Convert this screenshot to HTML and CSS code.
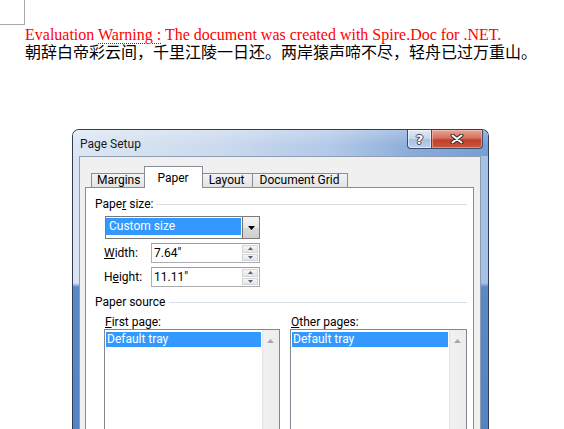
FILE: index.html
```html
<!DOCTYPE html>
<html>
<head>
<meta charset="utf-8">
<title>Page Setup</title>
<link rel="stylesheet" href="styles.css">
</head>
<body>
<div class="page">
  <div class="corner"></div>
  <p class="warn">Evaluation <span class="squiggle">Warning :</span> The document was created with Spire.Doc for .NET.</p>
  <p class="poem">朝辞白帝彩云间，千里江陵一日还。两岸猿声啼不尽，轻舟已过万重山。</p>

  <div class="dialog">
    <div class="titlebar">
      <span class="title">Page Setup</span>
      <div class="caption-btns">
        <div class="cbtn help">?</div>
        <div class="cbtn close">
          <svg width="14" height="10" viewBox="0 0 14 10">
            <path d="M2.5 1.5L11.5 8.5M11.5 1.5L2.5 8.5" stroke="#3a2a2a" stroke-width="4" stroke-linecap="round" fill="none"/>
            <path d="M2.5 1.5L11.5 8.5M11.5 1.5L2.5 8.5" stroke="#ffffff" stroke-width="2" stroke-linecap="round" fill="none"/>
          </svg>
        </div>
      </div>
    </div>
    <div class="frame">
      <div class="client">
        <div class="tabs">
          <div class="tab tab-first">Margins</div>
          <div class="tab active">Paper</div>
          <div class="tab">Layout</div>
          <div class="tab">Document Grid</div>
        </div>
        <div class="panel">
          <div class="group-head"><span>Pape<u>r</u> size:</span><i class="rule"></i></div>
          <div class="group-body">
            <div class="combo">
              <div class="combo-val">Custom size</div>
              <div class="combo-btn">
                <svg width="7" height="4" viewBox="0 0 7 4"><path d="M0 0h7L3.5 4z" fill="#000"/></svg>
              </div>
            </div>
            <div class="field">
              <span class="field-label"><u>W</u>idth:</span>
              <div class="spin">
                <span class="spin-val">7.64"</span>
                <div class="spin-btns">
                  <div class="spin-btn"><svg width="7" height="4" viewBox="0 0 7 4"><path d="M0 4h7L3.5 0z" fill="#4d6185"/></svg></div>
                  <div class="spin-btn"><svg width="7" height="4" viewBox="0 0 7 4"><path d="M0 0h7L3.5 4z" fill="#4d6185"/></svg></div>
                </div>
              </div>
            </div>
            <div class="field">
              <span class="field-label">H<u>e</u>ight:</span>
              <div class="spin">
                <span class="spin-val">11.11"</span>
                <div class="spin-btns">
                  <div class="spin-btn"><svg width="7" height="4" viewBox="0 0 7 4"><path d="M0 4h7L3.5 0z" fill="#4d6185"/></svg></div>
                  <div class="spin-btn"><svg width="7" height="4" viewBox="0 0 7 4"><path d="M0 0h7L3.5 4z" fill="#4d6185"/></svg></div>
                </div>
              </div>
            </div>
          </div>

          <div class="group-head source"><span>Paper source</span><i class="rule"></i></div>
          <div class="group-body lists">
            <div class="listcol first">
              <div class="list-label"><u>F</u>irst page:</div>
              <div class="listbox">
                <div class="list-items"><div class="item sel">Default tray</div></div>
                <div class="vscroll"><svg width="7" height="4" viewBox="0 0 7 4"><path d="M0 4h7L3.5 0z" fill="#a8a8a8"/></svg></div>
              </div>
            </div>
            <div class="listcol other">
              <div class="list-label"><u>O</u>ther pages:</div>
              <div class="listbox">
                <div class="list-items"><div class="item sel">Default tray</div></div>
                <div class="vscroll"><svg width="7" height="4" viewBox="0 0 7 4"><path d="M0 4h7L3.5 0z" fill="#a8a8a8"/></svg></div>
              </div>
            </div>
          </div>
        </div>
      </div>
    </div>
  </div>
</div>
</body>
</html>
```

FILE: styles.css
```css
html, body {
  margin: 0;
  padding: 0;
  background: #ffffff;
}

.page {
  overflow: hidden;
}

.corner {
  width: 24px;
  height: 24px;
  border-right: 1px solid #a8a8a8;
  border-bottom: 1px solid #a8a8a8;
}

.warn {
  margin: 2px 0 0 25px;
  font: 16px/16px "Liberation Serif", "Times New Roman", serif;
  color: #ff0000;
  white-space: nowrap;
}

.squiggle {
  text-decoration: underline dotted #3030ff;
  text-decoration-thickness: 1px;
  text-underline-offset: 3px;
}

.poem {
  margin: 0 0 0 25px;
  font: 16px/16px "Noto Sans CJK SC", sans-serif;
  color: #000000;
  white-space: nowrap;
  text-spacing-trim: space-all;
}

/* ---------- dialog ---------- */
.dialog {
  margin: 70px 0 0 72px;
  width: 417px;
  box-sizing: border-box;
  border: 1px solid #2f3e55;
  border-bottom: none;
  border-radius: 7px 7px 0 0;
  overflow: hidden;
  font: 12px Roboto, "Liberation Sans", sans-serif;
  color: #000000;
}

.titlebar {
  height: 26px;
  display: flex;
  align-items: flex-start;
  background:
    linear-gradient(180deg, rgba(255, 255, 255, 0.25) 0%, rgba(255, 255, 255, 0) 60%),
    linear-gradient(90deg, #dde7f3 0%, #cbdaee 35%, #b3c9e8 62%, #8aacdb 82%, #769fd5 100%);
}

.title {
  margin: 7px 0 0 7px;
  line-height: 14px;
  color: #1a1a1a;
}

.caption-btns {
  margin-left: auto;
  margin-right: 5px;
  display: flex;
}

.cbtn {
  height: 19px;
  box-sizing: border-box;
  border: 1px solid #3d4d68;
  border-top: none;
  display: flex;
  align-items: center;
  justify-content: center;
}

.help {
  width: 25px;
  border-radius: 0 0 0 4px;
  background: linear-gradient(180deg, #dfe8f4 0%, #c6d6ec 50%, #a9c1e2 52%, #b9d0ee 100%);
  box-shadow: inset 0 0 0 1px rgba(255, 255, 255, 0.55);
  color: #ffffff;
  font: bold 13px/13px "DejaVu Sans", sans-serif;
  text-shadow: -1px 0 #33435e, 1px 0 #33435e, 0 -1px #33435e, 0 1px #33435e;
}

.close {
  width: 51px;
  border-left: none;
  border-radius: 0 0 4px 0;
  background: linear-gradient(180deg, #e6a596 0%, #d7705c 45%, #c2402b 55%, #c9553c 100%);
  box-shadow: inset 0 0 0 1px rgba(255, 220, 210, 0.45);
}

.frame {
  padding: 0 7px 0 6px;
  background:
    linear-gradient(180deg, rgba(0, 0, 0, 0) 0, rgba(0, 0, 0, 0) 127px, #5a89c8 131px, #4f80c3 100%),
    linear-gradient(90deg, #dbe5f2 0%, #c5d6ec 50%, #a6c1e5 100%);
}

.client {
  border: 1px solid #8e9cb0;
  border-bottom: none;
  background: #f0f0f0;
  padding: 9px 6px 0 5px;
}

/* ---------- tabs ---------- */
.tabs {
  display: flex;
  align-items: flex-end;
  height: 21px;
  padding-left: 6px;
  position: relative;
  z-index: 1;
}

.tab {
  height: 14px;
  box-sizing: border-box;
  border: 1px solid #898c95;
  border-bottom: none;
  background: linear-gradient(180deg, #f3f3f3, #e3e3e3);
  padding: 0 7px;
  line-height: 12px;
  margin-right: -1px;
  white-space: nowrap;
}

.tab.tab-first {
  padding: 0 5px;
}

.tab.active {
  height: 22px;
  margin: 0 -2px -1px -1px;
  padding: 4px 13px 0 12px;
  line-height: 14px;
  background: #ffffff;
  position: relative;
  z-index: 2;
}

/* ---------- panel ---------- */
.panel {
  border: 1px solid #898c95;
  background: #ffffff;
  padding: 9px 6px 60px 9px;
}

.group-head {
  display: flex;
  align-items: center;
  line-height: 15px;
  white-space: nowrap;
}

.group-head.source {
  margin-top: 8px;
}

.rule {
  flex: 1;
  height: 1px;
  background: #d5dfe5;
  margin-left: 4px;
}

.group-body {
  padding-left: 9px;
}

/* combo */
.combo {
  margin: 4px 0 0 1px;
  width: 155px;
  height: 23px;
  box-sizing: border-box;
  border: 1px solid #7a7a7a;
  background: #ffffff;
  display: flex;
}

.combo-val {
  flex: 1;
  margin: 1px 1px 3px 0;
  background: #3399ff;
  color: #ffffff;
  padding-left: 3px;
  line-height: 17px;
}

.combo-btn {
  width: 17px;
  box-sizing: border-box;
  border-left: 1px solid #707070;
  background: linear-gradient(180deg, #f4f4f4 0%, #e8e8e8 50%, #d9d9d9 51%, #cfcfcf 100%);
  display: flex;
  align-items: center;
  justify-content: center;
}

/* spin fields */
.field {
  margin-top: 4px;
  display: flex;
  align-items: center;
  height: 20px;
}

.field + .field {
  margin-top: 4px;
}

.field-label {
  width: 47px;
}

.spin {
  width: 109px;
  height: 20px;
  box-sizing: border-box;
  border: 1px solid #abadb3;
  border-top-color: #9a9ca3;
  background: #ffffff;
  display: flex;
}

.spin-val {
  flex: 1;
  padding-left: 2px;
  line-height: 18px;
}

.spin-btns {
  width: 16px;
  display: flex;
  flex-direction: column;
  padding: 1px 1px 1px 0;
  gap: 1px;
}

.spin-btn {
  flex: 1;
  background: linear-gradient(180deg, #f6f6f6, #e4e4e4);
  border: 1px solid #d4d4d4;
  display: flex;
  align-items: center;
  justify-content: center;
}

.spin-btn svg {
  width: 5px;
  height: 3px;
}

/* lists */
.lists {
  margin-top: 5px;
  display: flex;
  gap: 10px;
}

.listcol.first {
  width: 176px;
}

.listcol.other {
  width: 177px;
}

.list-label {
  line-height: 14px;
  padding-left: 1px;
}

.listbox {
  height: 140px;
  box-sizing: border-box;
  border: 1px solid #828790;
  display: flex;
  background: #ffffff;
}

.list-items {
  flex: 1;
  padding: 2px 1px 0 1px;
}

.item {
  height: 15px;
  line-height: 15px;
  padding-left: 1px;
}

.item.sel {
  background: #3399ff;
  color: #ffffff;
}

.vscroll {
  width: 17px;
  background: linear-gradient(90deg, #e3e3e3 0, #f1f1f1 2px, #ececec 100%);
  display: flex;
  justify-content: center;
  padding-top: 9px;
  box-sizing: border-box;
  align-items: flex-start;
}
```
